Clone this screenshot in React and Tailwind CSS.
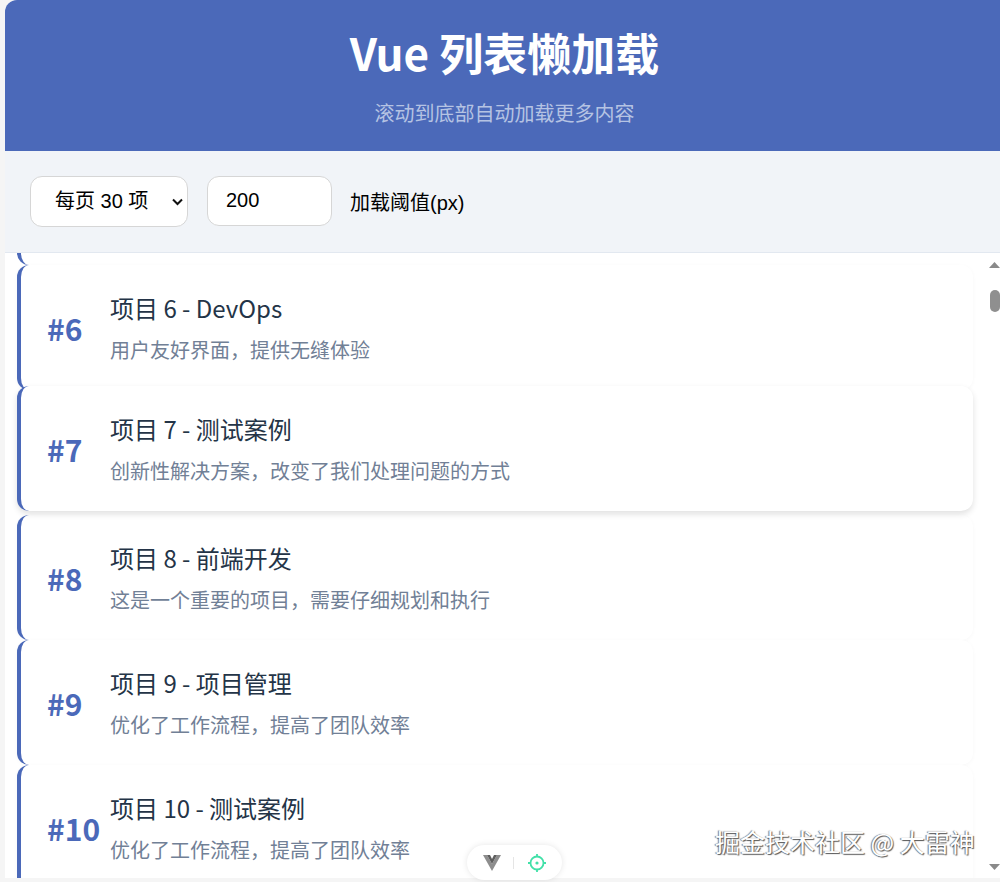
const cjk = "font-['Noto_Sans_CJK_SC','Noto_Sans',sans-serif]";
const items = [
  { n: 6, t: "项目 6 - DevOps", d: "用户友好界面，提供无缝体验" },
  { n: 7, t: "项目 7 - 测试案例", d: "创新性解决方案，改变了我们处理问题的方式", hover: true },
  { n: 8, t: "项目 8 - 前端开发", d: "这是一个重要的项目，需要仔细规划和执行" },
  { n: 9, t: "项目 9 - 项目管理", d: "优化了工作流程，提高了团队效率" },
  { n: 10, t: "项目 10 - 测试案例", d: "优化了工作流程，提高了团队效率" },
];

function Item({ n, t, d, hover }) {
  return (
    <div
      className={
        "flex h-[125px] shrink-0 items-center rounded-xl border-l-4 border-[#4b69b9] bg-white pl-[26px] " +
        (hover ? "relative -translate-y-1 shadow-[0_3px_6px_rgba(0,0,0,0.12)]" : "shadow-[0_1px_4px_rgba(0,0,0,0.03)]")
      }
    >
      <div className="w-[63px] shrink-0 text-[30px] leading-none font-bold text-[#4b69b9]">#{n}</div>
      <div className="flex flex-col pb-px">
        <div className="text-[24px] leading-[36px] text-[#243447]">{t}</div>
        <div className="mt-[9px] text-[20px] leading-[30px] text-[#718096]">{d}</div>
      </div>
    </div>
  );
}

export default function App() {
  return (
    <div className={"relative h-[882px] w-[1000px] overflow-hidden bg-[#f5f5f5] pl-[5px] " + cjk}>
      <div className="flex h-[878px] flex-col overflow-hidden rounded-tl-xl bg-white">
        <header className="flex h-[151px] shrink-0 flex-col items-center bg-[#4b69b9] pt-[22px] pl-[4px] text-white">
          <h1 className="text-[44px] leading-[60px] font-bold">Vue 列表懒加载</h1>
          <p className="mt-[16px] text-[20px] leading-[30px] text-[#b5c3e3]">滚动到底部自动加载更多内容</p>
        </header>
        <div className="flex h-[102px] shrink-0 items-center gap-[19px] border-b border-[#e2e8f0] bg-[#f1f4f8] pl-[25px] font-['Liberation_Sans','Noto_Sans_CJK_SC',sans-serif]">
          <div className="relative">
            <select className="block h-[51px] w-[158px] appearance-none rounded-xl border border-[#d6d6d6] bg-white pb-[2px] pl-[24px] text-[20px] text-black" defaultValue="30">
              <option value="30">每页 30 项</option>
            </select>
            <svg className="pointer-events-none absolute top-[22px] left-[142px]" width="11" height="8" viewBox="0 0 11 8" fill="none" stroke="#111" strokeWidth="2">
              <path d="M1 1.5L5.5 6L10 1.5" />
            </svg>
          </div>
          <input
            className="-mt-px h-[50px] w-[125px] rounded-xl border border-[#d6d6d6] bg-white pb-[2px] pl-[18px] text-[20px] text-black"
            defaultValue="200"
          />
          <span className="-ml-px pt-[2px] text-[20px] text-black">加载阈值(px)</span>
        </div>
        <div className="flex min-h-0 flex-1">
          <div className="flex min-w-0 flex-1 flex-col overflow-hidden px-[12px]">
            <div className="-mt-[113px] h-[125px] shrink-0 rounded-xl border-l-4 border-[#4b69b9] bg-white" />
            {items.map((it) => (
              <Item key={it.n} {...it} />
            ))}
          </div>
          <div className="relative w-[15px] shrink-0 bg-white">
            <svg className="absolute top-[9px] left-[4px]" width="11" height="6" viewBox="0 0 11 6"><path d="M5.5 0L11 6H0Z" fill="#8a8a8a" /></svg>
            <div className="absolute top-[37px] left-[5px] h-[22px] w-[10px] rounded-md bg-[#8f8f8f]" />
            <svg className="absolute bottom-[8px] left-[4px]" width="11" height="6" viewBox="0 0 11 6"><path d="M5.5 6L11 0H0Z" fill="#8a8a8a" /></svg>
          </div>
        </div>
      </div>
      <div className="absolute top-[845px] left-[467px] flex h-[35px] w-[95px] items-center rounded-full bg-white shadow-[0_0_6px_rgba(0,0,0,0.10)]">
        <svg className="ml-[16px]" width="18" height="16" viewBox="0 0 18 16">
          <path d="M0 0H4L9 9L14 0H18L9 16Z" fill="#8d8d8d" />
          <path d="M4 0H7L9 4L11 0H14L9 9Z" fill="#5e5e5e" />
        </svg>
        <div className="ml-[12px] h-[12px] w-px bg-[#e5e5e5]" />
        <svg className="ml-[13px]" width="20" height="20" viewBox="0 0 20 20" fill="none" stroke="#41e0a8" strokeWidth="1.8">
          <circle cx="10" cy="10" r="6.5" />
          <circle cx="10" cy="10" r="1.6" fill="#41e0a8" stroke="none" />
          <path d="M10 1V4M10 16V19M1 10H4M16 10H19" />
        </svg>
      </div>
      <div className="absolute top-[823px] left-[715px] text-[25px] leading-[37px] whitespace-nowrap text-white [text-shadow:1px_1px_1px_#555,-1px_0_1px_#777]">
        掘金技术社区 @ 大雷神
      </div>
    </div>
  );
}
